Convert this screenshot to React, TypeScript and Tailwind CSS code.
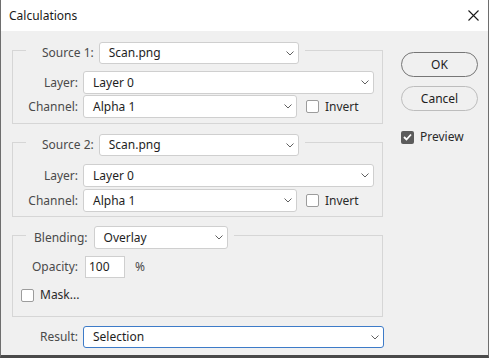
const font = "font-['Noto_Sans',sans-serif]";

const Chevron = () => (
  <svg width="8" height="5" viewBox="0 0 8 5" className="shrink-0">
    <path d="M0.5 0.5 L4 4 L7.5 0.5" fill="none" stroke="#606060" strokeWidth="1" />
  </svg>
);

const Select = ({
  value,
  width,
  tall,
  focused,
}: {
  value: string;
  width: string;
  tall?: boolean;
  focused?: boolean;
}) => (
  <div
    className={`${width} ${tall ? 'h-[23px]' : 'h-[22px]'} flex items-center justify-between rounded-[3px] border bg-white pl-[9px] pr-[4px] text-[12px] text-[#1e1e1e] ${
      focused ? 'border-[#3d7bc8]' : 'border-[#cfcfcf]'
    }`}
  >
    <span>{value}</span>
    <Chevron />
  </div>
);

const Checkbox = ({ checked }: { checked?: boolean }) =>
  checked ? (
    <div className="flex h-[13px] w-[13px] items-center justify-center rounded-[2px] bg-[#5b5b5b]">
      <svg width="9" height="8" viewBox="0 0 9 8">
        <path d="M1 4 L3.5 6.5 L8 1.5" fill="none" stroke="#fff" strokeWidth="1.8" />
      </svg>
    </div>
  ) : (
    <div className="h-[13px] w-[13px] rounded-[2px] border border-[#9c9c9c] bg-white" />
  );

const Label = ({ children }: { children: string }) => (
  <span className="w-[65px] shrink-0 text-right text-[12px] text-[#4a4a4a]">{children}</span>
);

const SourceGroup = ({ n, second }: { n: number; second?: boolean }) => (
  <div
    className={`w-[371px] border border-[#d6d6d6] ${second ? 'mt-[18px] pb-[4px]' : 'mt-[8px] pb-[5px]'}`}
  >
    <div className="-mt-[9px] ml-[13px] flex w-fit items-center gap-[5px] bg-[#f0f0f0] pl-[16px] pr-[6px]">
      <span className="text-[12px] text-[#4a4a4a]">Source {n}:</span>
      <Select value="Scan.png" width="w-[200px]" />
    </div>
    <div className={`${second ? 'mt-[8px]' : 'mt-[7px]'} flex items-center`}>
      <Label>Layer:</Label>
      <div className="ml-[5px]">
        <Select value="Layer 0" width="w-[291px]" tall />
      </div>
    </div>
    <div className={`${second ? 'mt-[2px]' : 'mt-[1px]'} flex items-center`}>
      <Label>Channel:</Label>
      <div className="ml-[5px]">
        <Select value="Alpha 1" width="w-[214px]" tall />
      </div>
      <div className="ml-[9px] flex items-center gap-[6px]">
        <Checkbox />
        <span className="text-[12px] text-[#2a2a2a]">Invert</span>
      </div>
    </div>
  </div>
);

export default function App() {
  return (
    <div className={`${font} flex h-[358px] w-[489px] flex-col border-x border-b-[3px] border-x-[#6e6e6e] border-b-[#4a4a4a] bg-[#f0f0f0]`}>
      {/* title bar */}
      <div className="flex h-[31px] shrink-0 items-center justify-between bg-white pl-[8px] pr-[9px]">
        <span className="text-[12px] text-[#1a1a1a]">Calculations</span>
        <svg width="11" height="11" viewBox="0 0 11 11">
          <path d="M0.5 0.5 L10.5 10.5 M10.5 0.5 L0.5 10.5" stroke="#1a1a1a" strokeWidth="1.1" />
        </svg>
      </div>

      <div className="flex flex-1 pl-[11px]">
        {/* left column */}
        <div className="flex flex-col pt-[11px]">
          <SourceGroup n={1} />
          <SourceGroup n={2} second />

          {/* blending */}
          <div className="mt-[18px] w-[371px] border border-[#d6d6d6] pb-[12px]">
            <div className="-mt-[10px] ml-[13px] flex w-fit items-center gap-[6px] bg-[#f0f0f0] pl-[8px] pr-[6px]">
              <span className="text-[12px] text-[#4a4a4a]">Blending:</span>
              <Select value="Overlay" width="w-[134px]" tall />
            </div>
            <div className="mt-[7px] flex items-center">
              <Label>Opacity:</Label>
              <div className="ml-[7px] flex h-[22px] w-[40px] items-center border border-[#cfcfcf] bg-white pl-[3px] text-[12px] text-[#1e1e1e]">
                100
              </div>
              <span className="ml-[10px] text-[12px] text-[#4a4a4a]">%</span>
            </div>
            <div className="ml-[8px] mt-[8px] flex items-center gap-[6px]">
              <Checkbox />
              <span className="text-[12px] text-[#2a2a2a]">Mask...</span>
            </div>
          </div>

          <div className="mt-[9px] flex items-center pl-[1px]">
            <Label>Result:</Label>
            <div className="ml-[5px]">
              <Select value="Selection" width="w-[301px]" focused />
            </div>
          </div>
        </div>

        {/* right column */}
        <div className="ml-[17px] flex flex-col pt-[21px]">
          <button className="flex h-[25px] w-[77px] items-center justify-center rounded-full border border-[#767676] bg-[#f0f0f0] text-[12px] text-[#1e1e1e]">
            OK
          </button>
          <button className="mt-[9px] flex h-[25px] w-[77px] items-center justify-center rounded-full border border-[#bdbdbd] bg-[#f0f0f0] text-[12px] text-[#1e1e1e]">
            Cancel
          </button>
          <div className="mt-[17px] flex items-center gap-[6px]">
            <Checkbox checked />
            <span className="text-[12px] text-[#2a2a2a]">Preview</span>
          </div>
        </div>
      </div>
    </div>
  );
}
